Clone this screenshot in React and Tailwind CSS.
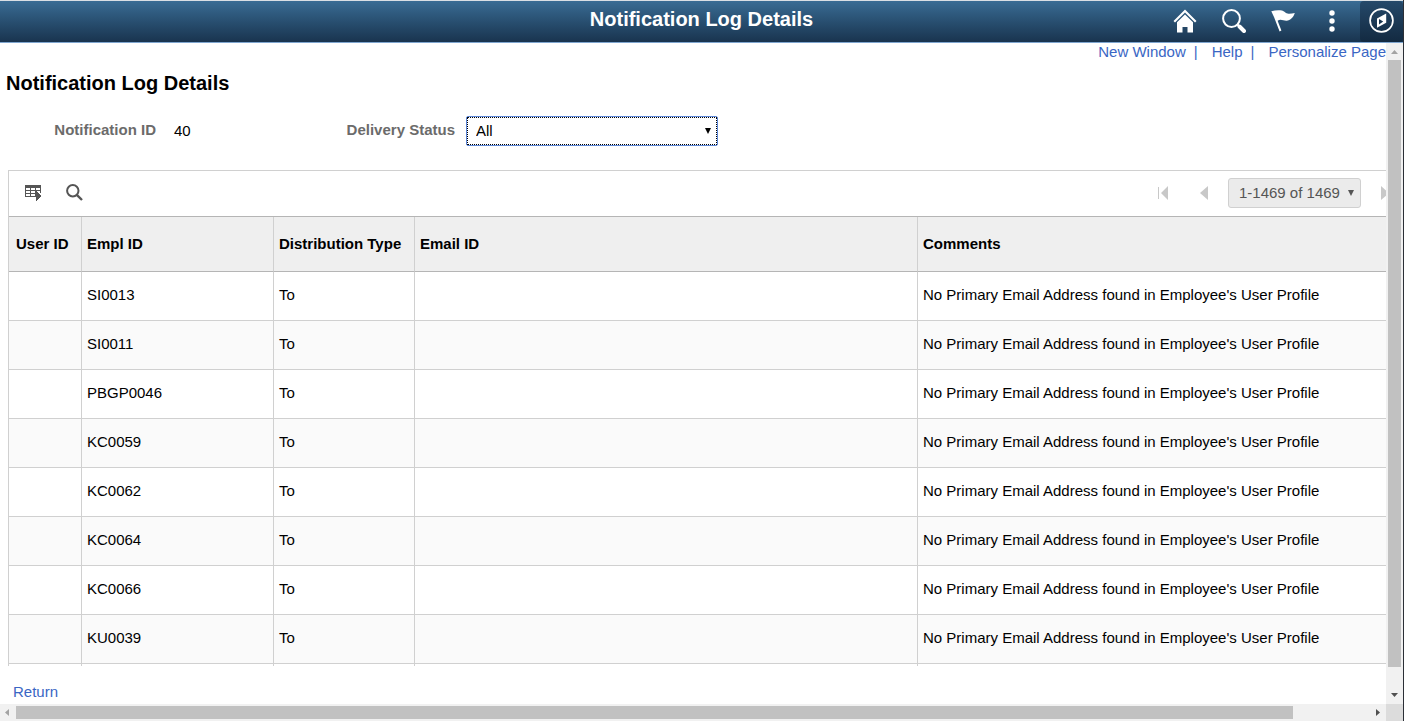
import React, { useState } from "react";

const ROWS = [
  { emplId: "SI0013", type: "To" },
  { emplId: "SI0011", type: "To" },
  { emplId: "PBGP0046", type: "To" },
  { emplId: "KC0059", type: "To" },
  { emplId: "KC0062", type: "To" },
  { emplId: "KC0064", type: "To" },
  { emplId: "KC0066", type: "To" },
  { emplId: "KU0039", type: "To" },
];
const COMMENT = "No Primary Email Address found in Employee's User Profile";

const th = "border-r border-b border-r-[#d0d0d0] border-b-[#b5b5b5] px-[5px] text-left font-bold";
const td = "border-r border-b border-[#d0d0d0] px-[5px] pb-0.5";

const HomeIcon = () => (
  <svg width="24" height="24" viewBox="0 0 24 24" fill="#fff">
    <path d="M12 0.5L23.5 12L22 13.5L12 3.6L2 13.5L0.5 12Z" />
    <path d="M12 5.4L20 13.3V23.5H14.5V18H9.5V23.5H4V13.3Z" />
  </svg>
);

const SearchIcon = () => (
  <svg width="24" height="24" viewBox="0 0 24 24" fill="none" stroke="#fff">
    <circle cx="9.5" cy="9.5" r="8.4" strokeWidth="2" />
    <path d="M15.5 15.5L17.5 17.5" strokeWidth="2" />
    <path d="M17.5 17.5L22 22" strokeWidth="4" strokeLinecap="round" />
  </svg>
);

const FlagIcon = () => (
  <svg width="24" height="24" viewBox="0 0 24 24" fill="#fff">
    <path d="M0.3 2.2C4 1.2 8 0.8 11 1.6C14.5 2.6 14.5 5 18 4.8C20 4.7 22 4.2 23.8 4C22.5 8 19.5 11.6 15.5 11.8C12.5 11.9 9.5 9.6 6.6 11.8L10.4 21.6L8.6 22.4L3 8Z" />
  </svg>
);

const DotsIcon = () => (
  <svg width="8" height="24" viewBox="0 0 8 24" fill="#fff">
    <circle cx="4" cy="4" r="2.7" />
    <circle cx="4" cy="12" r="2.7" />
    <circle cx="4" cy="20" r="2.7" />
  </svg>
);

const CompassIcon = () => (
  <svg width="25" height="25" viewBox="0 0 25 25">
    <circle cx="12.5" cy="12.5" r="11.4" fill="none" stroke="#fff" strokeWidth="1.7" />
    <path d="M17.2 5.4V14.8L8 19.8V10.4Z" fill="#fff" />
    <path d="M10 11L14.2 13.4L10 16.6Z" fill="#17344f" />
  </svg>
);

const GridActionIcon = () => (
  <svg width="17" height="16" viewBox="0 0 17 16" fill="none" stroke="#555" shapeRendering="crispEdges">
    <path d="M0 1.5H16" strokeWidth="3" />
    <path d="M0.5 1V12M5.5 3V12M10.5 3V12M15.5 1V8M0 5.5H16M0 8.5H11M0 11.5H11" />
    <path d="M11 6V16L16.5 11Z" fill="#555" stroke="none" />
  </svg>
);

const FindIcon = () => (
  <svg width="17" height="17" viewBox="0 0 17 17" fill="none" stroke="#555">
    <circle cx="6.8" cy="6.8" r="5.7" strokeWidth="2" />
    <path d="M10.8 10.8L16 16" strokeWidth="2.4" />
  </svg>
);

const FirstIcon = () => (
  <svg width="10" height="14" viewBox="0 0 10 14" fill="#c8c8c8">
    <path d="M0 1H1V13H0ZM10 0V14L3 7Z" />
  </svg>
);

const PrevIcon = () => (
  <svg width="8" height="14" viewBox="0 0 8 14" fill="#c8c8c8"><path d="M8 0V14L0 7Z" /></svg>
);

const NextIcon = () => (
  <svg width="8" height="14" viewBox="0 0 8 14" fill="#c8c8c8"><path d="M0 0V14L8 7Z" /></svg>
);

const DownArrow = ({ className }) => (
  <svg className={className} width="6" height="6" viewBox="0 0 6 6" fill="currentColor"><path d="M0 0H6L3 6Z" /></svg>
);

function Header() {
  const btn = "flex h-full w-[49px] items-center justify-center pb-0.5";
  return (
    <header className="grid h-[43px] shrink-0 grid-cols-[1fr_auto_1fr] border-t border-b border-t-[#d9dfe4] border-b-[#7fa6d0] bg-linear-to-b from-[#396c94] to-[#19344f]">
      <div />
      <h1 className="pt-1 text-[20px] leading-7 font-bold text-white">Notification Log Details</h1>
      <nav className="flex justify-end">
        <button className={btn} aria-label="Home"><HomeIcon /></button>
        <button className={btn} aria-label="Search"><SearchIcon /></button>
        <button className={btn} aria-label="Notifications"><FlagIcon /></button>
        <button className={btn} aria-label="Actions"><DotsIcon /></button>
        <button className="ml-1 flex w-[43px] items-center justify-center rounded-sm bg-linear-to-b from-[#25496a] to-[#132a41] pb-0.5" aria-label="NavBar">
          <CompassIcon />
        </button>
      </nav>
    </header>
  );
}

function Grid() {
  return (
    <section className="mt-6 ml-2 w-[calc(100%+32px)] border-t border-l border-[#d0d0d0]">
      <div className="flex h-[45px] items-center pr-[37px] pb-0.5 pl-4">
        <button aria-label="Grid action menu"><GridActionIcon /></button>
        <button className="ml-6" aria-label="Find"><FindIcon /></button>
        <button className="ml-auto" aria-label="First"><FirstIcon /></button>
        <button className="ml-8" aria-label="Previous"><PrevIcon /></button>
        <button className="ml-5 flex h-[30px] w-[133px] items-center justify-between rounded-[3px] border border-[#d0d0d0] bg-[#ebebeb] pr-1.5 pl-2.5 text-[#555]">
          1-1469 of 1469
          <DownArrow />
        </button>
        <button className="ml-5" aria-label="Next"><NextIcon /></button>
      </div>
      <table className="w-full table-fixed border-separate border-spacing-0 border-t border-[#b5b5b5]">
        <colgroup>
          <col className="w-[73px]" />
          <col className="w-[192px]" />
          <col className="w-[141px]" />
          <col className="w-[503px]" />
          <col />
        </colgroup>
        <thead>
          <tr className="h-[55px] bg-[#efefef]">
            <th className={`${th} pl-[7px]`}>User ID</th>
            <th className={th}>Empl ID</th>
            <th className={th}>Distribution Type</th>
            <th className={th}>Email ID</th>
            <th className={th}>Comments</th>
          </tr>
        </thead>
        <tbody>
          {ROWS.map((r) => (
            <tr key={r.emplId} className="h-[49px] even:bg-[#fafafa]">
              <td className={td} />
              <td className={td}>{r.emplId}</td>
              <td className={td}>{r.type}</td>
              <td className={td} />
              <td className={td}>{COMMENT}</td>
            </tr>
          ))}
        </tbody>
        {/* column rules run a little past the last visible row */}
        <tfoot aria-hidden="true">
          <tr className="h-0.5">
            <td className="border-r border-[#d0d0d0]" />
            <td className="border-r border-[#d0d0d0]" />
            <td className="border-r border-[#d0d0d0]" />
            <td className="border-r border-[#d0d0d0]" />
            <td />
          </tr>
        </tfoot>
      </table>
    </section>
  );
}

function VerticalScrollbar() {
  return (
    <div className="flex w-[17px] shrink-0 flex-col items-center bg-[#f1f1f1]" aria-hidden="true">
      <svg width="17" height="17" viewBox="0 0 17 17" fill="#a3a3a3"><path d="M5 11H12L8.5 7Z" /></svg>
      <div className="w-[13px] grow bg-[#c1c1c1]" />
      <svg className="mt-5" width="17" height="17" viewBox="0 0 17 17" fill="#505050"><path d="M5 6H12L8.5 10Z" /></svg>
    </div>
  );
}

function HorizontalScrollbar() {
  return (
    <div className="flex h-[17px] shrink-0 items-center bg-[#f1f1f1]" aria-hidden="true">
      <svg width="16" height="17" viewBox="0 0 16 17" fill="#a3a3a3"><path d="M9 5V12L5 8.5Z" /></svg>
      <div className="h-[13px] grow bg-[#c1c1c1]" />
      <svg className="ml-[76px]" width="17" height="17" viewBox="0 0 17 17" fill="#505050"><path d="M7 5V12L11 8.5Z" /></svg>
      <div className="h-full w-[17px] bg-[#dcdcdc]" />
    </div>
  );
}

export default function App() {
  const [status, setStatus] = useState("all");

  return (
    <div className="flex h-screen flex-col overflow-hidden border-r border-[#2b2f36] bg-white font-['Liberation_Sans',Arial,sans-serif] text-[15px] leading-5 text-black">
      <Header />
      <div className="flex min-h-0 grow">
        <main className="min-w-0 grow overflow-hidden">
          <div className="flex h-[18px] items-center justify-end text-[#3a66c4]">
            <a href="#new">New Window</a>
            <span className="ml-2">|</span>
            <a href="#help" className="ml-3.5">Help</a>
            <span className="ml-2">|</span>
            <a href="#personalize" className="ml-3.5">Personalize Page</a>
          </div>
          <h2 className="mt-2 ml-[6px] text-[20px] leading-7 font-bold">Notification Log Details</h2>
          <div className="mt-[19px] flex h-[30px] items-center">
            <span className="w-[156px] pb-0.5 text-right font-bold text-[#6b6b6b]">Notification ID</span>
            <span className="ml-[18px] w-10">40</span>
            <label htmlFor="status" className="w-[241px] pb-0.5 text-right font-bold text-[#6b6b6b]">Delivery Status</label>
            <div className="relative ml-[11px]">
              <select
                id="status"
                value={status}
                onChange={(e) => setStatus(e.target.value)}
                className="h-[30px] w-[252px] appearance-none rounded-xs border border-[#5b86d8] bg-white pl-[9px] outline-1 -outline-offset-2 outline-black outline-dotted"
              >
                <option value="all">All</option>
                <option value="success">Success</option>
                <option value="failed">Failed</option>
              </select>
              <DownArrow className="pointer-events-none absolute top-3 right-[7px]" />
            </div>
          </div>
          <Grid />
          <a href="#return" className="mt-4 ml-[13px] inline-block text-[#3a66c4]">Return</a>
        </main>
        <VerticalScrollbar />
      </div>
      <HorizontalScrollbar />
    </div>
  );
}
